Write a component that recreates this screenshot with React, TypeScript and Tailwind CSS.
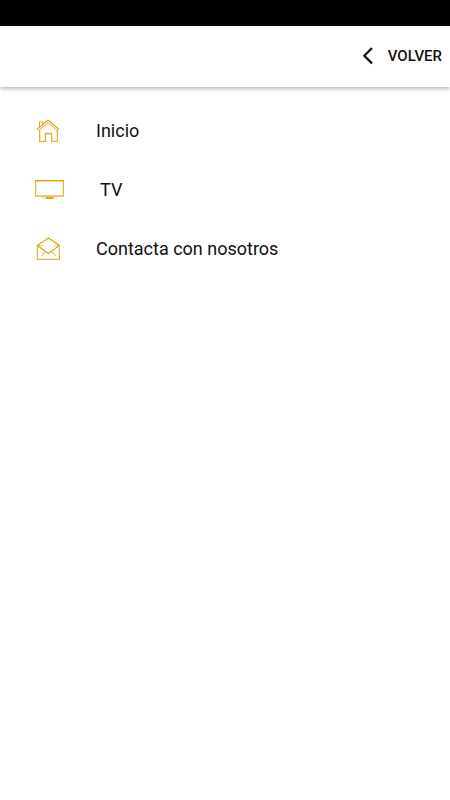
import type { ReactNode } from "react";

type MenuItem = {
  label: string;
  href: string;
  icon: ReactNode;
};

const HomeIcon = () => (
  <svg
    className="w-[25px] h-6"
    viewBox="0 0 25 24"
    fill="none"
    stroke="#dda61e"
    aria-hidden="true"
  >
    <path d="M2 10.4 13 1 24 10.4" strokeWidth="1.3" />
    <path d="M3.4 12 13 3.8 22.6 12" strokeWidth="1" />
    <path d="M4.5 8.2V2.8H7.5V5.6" strokeWidth="1" />
    <path
      d="M4.6 11V22.3H10.4V14.5H16.6V22.3H22.4V11"
      stroke="#e0ae38"
      strokeWidth="1.3"
    />
  </svg>
);

const TvIcon = () => (
  <svg className="w-[29px] h-6" viewBox="0 0 29 24" fill="none" aria-hidden="true">
    <path d="M0.6 2.5V18H28.4V2.5" stroke="#e4b44c" strokeWidth="1.3" />
    <path d="M0 2.7H29" stroke="#dfa410" strokeWidth="1.5" />
    <path d="M6.5 20H22.5" stroke="#f3dcae" strokeWidth="1.4" />
    <path d="M11 20H18.5" stroke="#dfa410" strokeWidth="2" />
  </svg>
);

const MailIcon = () => (
  <svg
    className="w-[25px] h-6"
    viewBox="0 0 25 24"
    fill="none"
    stroke="#dda61e"
    aria-hidden="true"
  >
    <path d="M2.4 8.5V22.4H24.4V8.5" stroke="#e3b548" strokeWidth="1.3" />
    <path d="M2.4 8.5 13.4 1 24.4 8.5 13.4 16.5Z" strokeWidth="1.3" />
    <path d="M3 8.5H8M19 8.5H24" strokeWidth="0.6" />
    <path d="M6.5 19 10.5 14.5M20.5 19 16.5 14.5" />
  </svg>
);

const menuItems: MenuItem[] = [
  { label: "Inicio", href: "#inicio", icon: <HomeIcon /> },
  { label: "TV", href: "#tv", icon: <TvIcon /> },
  { label: "Contacta con nosotros", href: "#contacto", icon: <MailIcon /> },
];

const App = () => {
  return (
    <div className="min-h-screen bg-white text-[#111111] font-['Roboto',sans-serif]">
      <div className="h-[26px] bg-black" />

      <header className="flex h-[61px] items-center justify-end px-2 shadow-[0_2px_4px_rgba(0,0,0,0.28)]">
        <button type="button" className="flex items-center gap-3 text-[15px] font-medium">
          <svg
            className="w-4 h-5"
            viewBox="0 0 16 20"
            fill="none"
            stroke="currentColor"
            strokeWidth="2.2"
            aria-hidden="true"
          >
            <path d="M12 1 4.3 8.7 12 16.4" />
          </svg>
          VOLVER
        </button>
      </header>

      <nav className="pt-[14px]">
        <ul>
          {menuItems.map((item) => (
            <li key={item.href}>
              <a
                href={item.href}
                className="flex h-[59px] items-center gap-9 px-[35px] text-lg"
              >
                {item.icon}
                <span>{item.label}</span>
              </a>
            </li>
          ))}
        </ul>
      </nav>
    </div>
  );
};

export default App;
